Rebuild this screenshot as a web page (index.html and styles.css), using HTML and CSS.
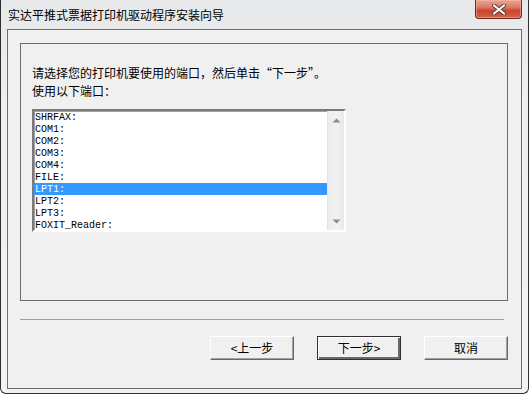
FILE: index.html
```html
<!DOCTYPE html>
<html lang="zh-CN">
<head>
  <meta charset="UTF-8" />
  <title>实达平推式票据打印机驱动程序安装向导</title>
  <link rel="stylesheet" href="styles.css">
</head>
<body>
  <div class="window">
    <div class="titlebar">
      <span class="title">实达平推式票据打印机驱动程序安装向导</span>
      <div class="close">
        <svg width="14" height="11" viewBox="0 0 14 11">
          <path d="M2 1.5 L12 9.5 M12 1.5 L2 9.5" stroke="#5b3a34" stroke-width="4" stroke-linecap="round"/>
          <path d="M2 1.5 L12 9.5 M12 1.5 L2 9.5" stroke="#ffffff" stroke-width="2.2" stroke-linecap="round"/>
        </svg>
      </div>
    </div>
    <div class="client">
      <div class="group">
        <p class="prompt">请选择您的打印机要使用的端口，然后单击“下一步”。</p>
        <p class="label">使用以下端口：</p>
        <div class="listbox">
          <ul class="items">
            <li><span>SHRFAX:</span></li>
            <li><span>COM1:</span></li>
            <li><span>COM2:</span></li>
            <li><span>COM3:</span></li>
            <li><span>COM4:</span></li>
            <li><span>FILE:</span></li>
            <li class="selected"><span>LPT1:</span></li>
            <li><span>LPT2:</span></li>
            <li><span>LPT3:</span></li>
            <li><span>FOXIT_Reader:</span></li>
          </ul>
          <div class="scrollbar">
            <svg width="9" height="5" viewBox="0 0 9 5"><path d="M0.5 4.5 L4.5 0.5 L8.5 4.5 Z" fill="#8a8a8a"/></svg>
            <svg width="9" height="5" viewBox="0 0 9 5"><path d="M0.5 0.5 L4.5 4.5 L8.5 0.5 Z" fill="#8a8a8a"/></svg>
          </div>
        </div>
      </div>
      <div class="separator"></div>
      <div class="buttons">
        <button class="btn">&lt;上一步</button>
        <button class="btn default">下一步&gt;</button>
        <button class="btn">取消</button>
      </div>
    </div>
  </div>
</body>
</html>
```

FILE: styles.css
```css
body {
  margin: 0;
  background: #ffffff;
  font-family: "Noto Sans CJK SC", "Noto Sans", sans-serif;
  font-size: 12px;
  color: #000000;
}
.window {
  width: 529px;
  height: 394px;
  box-sizing: border-box;
  border: 1px solid #2f2f2f;
  border-top: none;
  border-radius: 0 0 6px 6px;
  background: linear-gradient(180deg, #e6e8ea 0%, #eef0f1 30%, #f2f2f2 100%);
  padding: 0 6px;
  display: flex;
  flex-direction: column;
}
.titlebar {
  height: 29px;
  display: flex;
  justify-content: space-between;
  align-items: flex-start;
}
.title {
  margin-left: 1px;
  margin-top: 6px;
  line-height: 18px;
  color: #000000;
}
.close {
  width: 45px;
  height: 18px;
  border: 1px solid #6b2a20;
  border-top: none;
  border-radius: 0 0 4px 4px;
  background: linear-gradient(180deg, #e9a698 0%, #dd7a64 40%, #c9432d 60%, #d3634a 100%);
  box-shadow: inset 0 0 0 1px rgba(255, 190, 170, 0.5);
  display: flex;
  justify-content: center;
  align-items: center;
}
.client {
  width: 515px;
  height: 360px;
  box-sizing: border-box;
  border: 1px solid #6d6d6d;
  background: #f0f0f0;
  padding: 13px 13px 0 12px;
}
.group {
  height: 258px;
  box-sizing: border-box;
  border: 1px solid #6d6d6d;
  padding: 20px 0 0 11px;
}
.prompt, .label {
  margin: 0;
  line-height: 18px;
}
.listbox {
  margin-top: 9px;
  width: 314px;
  height: 123px;
  box-sizing: border-box;
  border: 2px solid;
  border-color: #7a7a7a #ffffff #ffffff #7a7a7a;
  box-shadow: inset 1px 1px 0 #a0a0a0;
  background: #ffffff;
  display: flex;
}
.items {
  list-style: none;
  margin: 0;
  padding: 0;
  width: 293px;
}
.items li {
  height: 12px;
  line-height: 12px;
  padding-left: 1px;
  font-family: "Liberation Mono", monospace;
  font-size: 11px;
  white-space: nowrap;
  overflow: hidden;
}
.items li span {
  display: inline-block;
  transform: scaleX(0.91);
  transform-origin: left center;
}
.items li.selected {
  background: #3399ff;
  color: #ffffff;
}
.scrollbar {
  width: 17px;
  box-sizing: border-box;
  border-left: 1px solid #e4e4e4;
  background: linear-gradient(90deg, #ececec, #f2f2f2 50%, #e9e9e9);
  display: flex;
  flex-direction: column;
  justify-content: space-between;
  align-items: center;
  padding: 7px 0 6px;
}
.separator {
  margin-top: 18px;
  width: 484px;
  height: 1px;
  background: #a0a0a0;
}
.buttons {
  margin-top: 16px;
  display: flex;
  justify-content: flex-end;
  gap: 23px;
}
.btn {
  width: 84px;
  height: 24px;
  box-sizing: border-box;
  font-family: "Noto Sans CJK SC", "Noto Sans", sans-serif;
  font-size: 12px;
  color: #000000;
  background: #f0f0f0;
  border: 1px solid;
  border-color: #ffffff #696969 #696969 #ffffff;
  box-shadow: inset -1px -1px 0 #a0a0a0;
  padding: 0;
  line-height: 20px;
}
.btn.default {
  border: 1px solid #303030;
  box-shadow: inset 1px 1px 0 #ffffff, inset -2px -2px 0 #696969;
}
```
